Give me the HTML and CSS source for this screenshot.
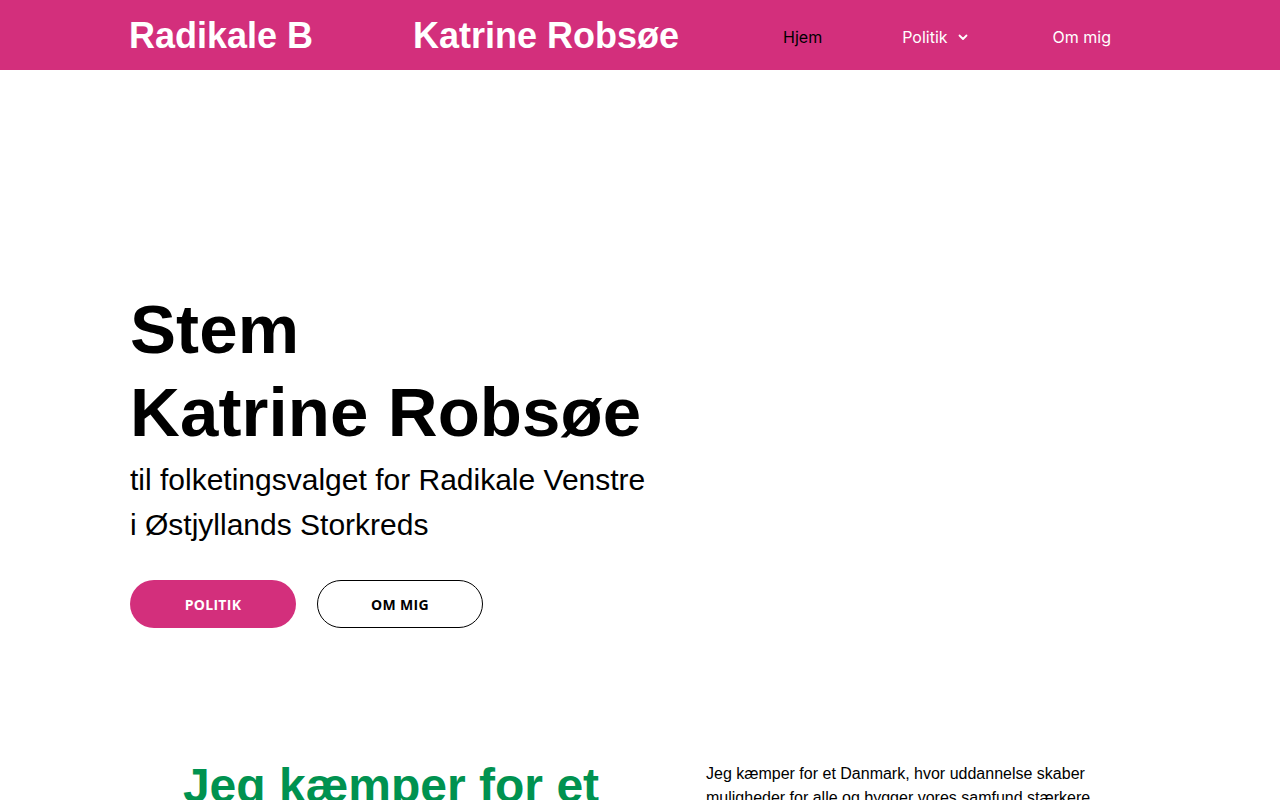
FILE: index.html
```html
<!DOCTYPE html>
<html lang="da">
<head>
<meta charset="utf-8">
<title>Katrine Robsøe</title>
<link rel="stylesheet" href="styles.css">
</head>
<body>
<header class="site-header">
  <div class="header-inner">
    <div class="brand">
      <span class="brand-party">Radikale B</span>
      <span class="brand-name">Katrine Robsøe</span>
    </div>
    <nav class="main-nav">
      <a class="nav-item current" href="#">Hjem</a>
      <a class="nav-item has-sub" href="#">Politik
        <svg class="chev" width="10" height="7" viewBox="0 0 10 7" aria-hidden="true"><path d="M1.5 1.5 L5 5 L8.5 1.5" fill="none" stroke="currentColor" stroke-width="1.8" stroke-linecap="round" stroke-linejoin="round"/></svg>
      </a>
      <a class="nav-item" href="#">Om mig</a>
    </nav>
  </div>
</header>

<main>
  <section class="hero">
    <div class="container">
      <h1 class="hero-title">Stem<br>Katrine Robsøe</h1>
      <p class="hero-sub">til folketingsvalget for Radikale Venstre<br>i Østjyllands Storkreds</p>
      <div class="hero-buttons">
        <a class="btn btn-primary" href="#">POLITIK</a>
        <a class="btn btn-outline" href="#">OM MIG</a>
      </div>
    </div>
  </section>

  <section class="intro">
    <div class="container intro-grid">
      <h2 class="intro-title">Jeg kæmper for et Danmark</h2>
      <p class="intro-text">Jeg kæmper for et Danmark, hvor uddannelse skaber muligheder for alle og bygger vores samfund stærkere.</p>
    </div>
  </section>
</main>
</body>
</html>
```
FILE: styles.css
```css
* { box-sizing: border-box; }

html, body {
  margin: 0;
  padding: 0;
  background: #ffffff;
  font-family: "Liberation Sans", Arial, sans-serif;
  color: #000;
}

a { text-decoration: none; }

.site-header {
  background: #d32f7c;
  height: 70px;
}

.header-inner {
  max-width: 1022px;
  margin: 0 auto;
  height: 70px;
  display: flex;
  align-items: center;
  justify-content: space-between;
}

.brand {
  display: flex;
  align-items: center;
  gap: 100px;
  padding-top: 2px;
  font-family: "Liberation Sans", Arial, sans-serif;
  font-weight: 700;
  font-size: 36px;
  color: #fff;
  line-height: 1;
}

.main-nav {
  display: flex;
  align-items: center;
  height: 70px;
}

.nav-item {
  font-family: Inter, "Noto Sans", sans-serif;
  font-size: 16px;
  color: #fff;
  padding: 3px 40px 0;
  display: flex;
  align-items: center;
  gap: 10px;
  height: 70px;
  line-height: 1;
}

.nav-item.current { color: #000; }

.nav-item.has-sub { padding-right: 45px; }

.nav-item:last-child { padding-right: 40px; }

.chev { display: block; margin-top: 1px; }

.container {
  max-width: 1020px;
  margin: 0 auto;
}

.hero {
  padding: 218px 0 129px;
}

.hero-title {
  margin: 0;
  font-size: 69px;
  font-weight: 700;
  line-height: 83px;
  letter-spacing: 0.1px;
}

.hero-sub {
  margin: 3px 0 0;
  font-size: 30px;
  line-height: 45px;
}

.hero-buttons {
  display: flex;
  gap: 21px;
  margin-top: 33px;
}

.btn {
  width: 166px;
  height: 48px;
  border-radius: 24px;
  display: flex;
  align-items: center;
  justify-content: center;
  font-family: "Open Sans", "Noto Sans", sans-serif;
  font-weight: 700;
  font-size: 14px;
  letter-spacing: 0.3px;
}

.btn-primary {
  background: #d32f7c;
  color: #fff;
}

.btn-outline {
  background: #fff;
  color: #000;
  border: 1px solid #000;
}

.intro-grid {
  display: grid;
  grid-template-columns: 522px 1fr;
  column-gap: 54px;
  align-items: start;
}

.intro-title {
  margin: 0;
  text-align: center;
  color: #009250;
  font-size: 48px;
  font-weight: 700;
  line-height: 1.2;
}

.intro-text {
  margin: 5px 0 0;
  font-size: 16px;
  line-height: 24px;
}
```
